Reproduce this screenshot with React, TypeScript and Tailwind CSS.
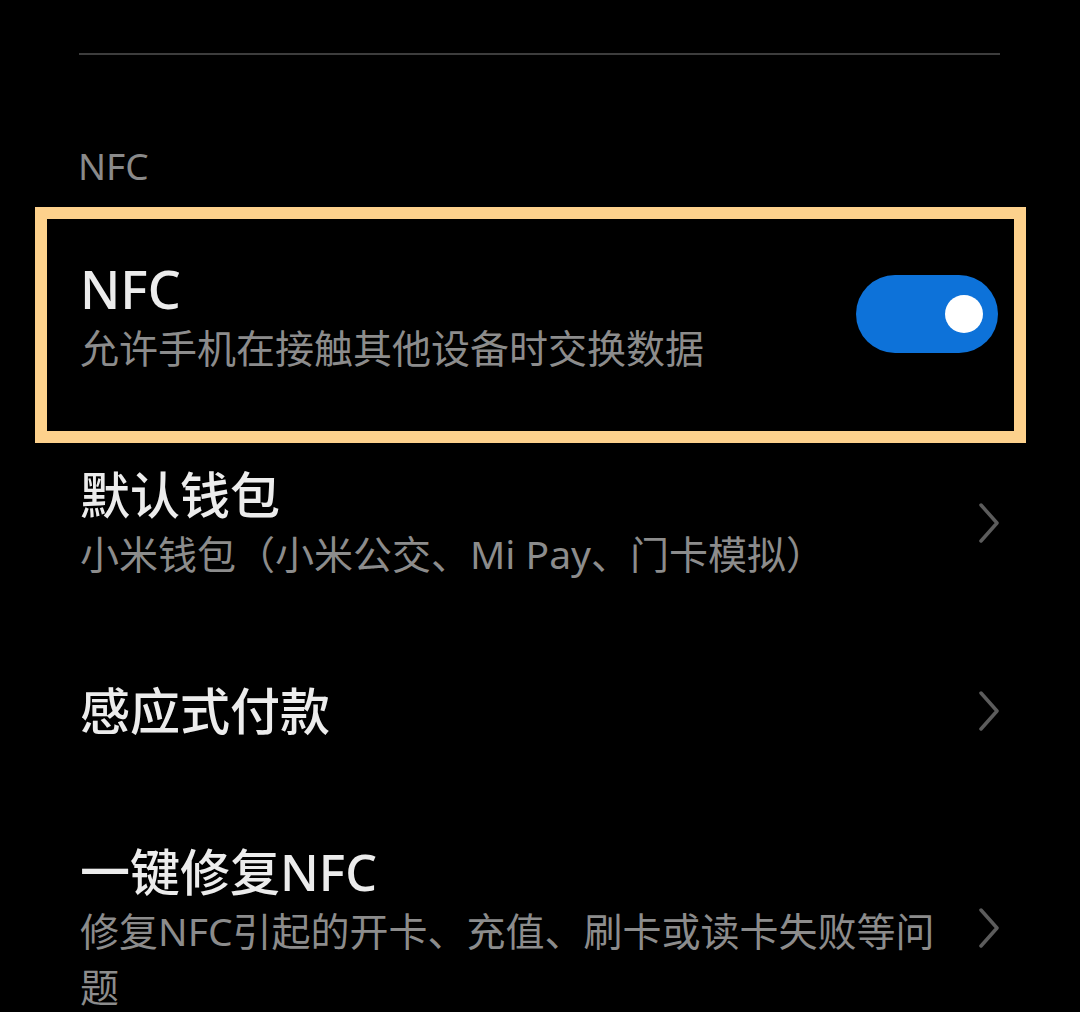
import React from "react";

const Chevron = () => (
  <svg width="22" height="40" viewBox="0 0 22 40" fill="none" className="shrink-0">
    <polyline
      points="3,2 19,20 3,38"
      stroke="#5c5c5c"
      strokeWidth="3.5"
      strokeLinecap="round"
      strokeLinejoin="round"
    />
  </svg>
);

interface RowProps {
  title: string;
  subtitle?: string;
  className?: string;
}

const LinkRow: React.FC<RowProps> = ({ title, subtitle, className }) => {
  return (
    <div className={"flex items-center " + (className ?? "")}>
      <div className="flex-1 min-w-0 pr-[20px]">
        <div className="text-[50px] leading-[62px] font-medium text-[#ececec]">{title}</div>
        {subtitle && (
          <div className="text-[39px] leading-[56px] text-[#8c8c8c]">{subtitle}</div>
        )}
      </div>
      <Chevron />
    </div>
  );
};

export default function App() {
  return (
    <div className="w-full h-[1012px] overflow-hidden bg-black font-['Noto_Sans','Noto_Sans_CJK_SC',sans-serif]">
      <div className="px-[80px] pt-[53px]">
        <div className="h-[2px] bg-[#3d3d3d] -ml-px" />

        <div className="pt-[87px] pb-[17px] text-[37px] leading-[48px] text-[#8a8a8a] -ml-[2px]">NFC</div>

        {/* highlighted NFC toggle row */}
        <div className="-ml-[45px] -mr-[26px] border-[12px] border-[#fdd18c] pl-[33px] pr-[16px] pt-[39px] pb-[55px] flex items-center">
          <div className="flex-1 min-w-0">
            <div className="text-[52px] leading-[62px] font-medium text-[#ececec]">NFC</div>
            <div className="text-[39px] leading-[56px] text-[#8c8c8c]">允许手机在接触其他设备时交换数据</div>
          </div>
          <div className="w-[142px] h-[78px] rounded-full bg-[#0d72d9] flex items-center justify-end pr-[15px] -mt-[6px]">
            <div className="w-[38px] h-[38px] rounded-full bg-white" />
          </div>
        </div>

        <LinkRow
          title="默认钱包"
          subtitle="小米钱包（小米公交、Mi Pay、门卡模拟）"
          className="pt-[21px] pb-[49px]"
        />
        <LinkRow title="感应式付款" className="py-[49px]" />
        <LinkRow
          title="一键修复NFC"
          subtitle="修复NFC引起的开卡、充值、刷卡或读卡失败等问题"
          className="pt-[50px]"
        />
      </div>
    </div>
  );
}
